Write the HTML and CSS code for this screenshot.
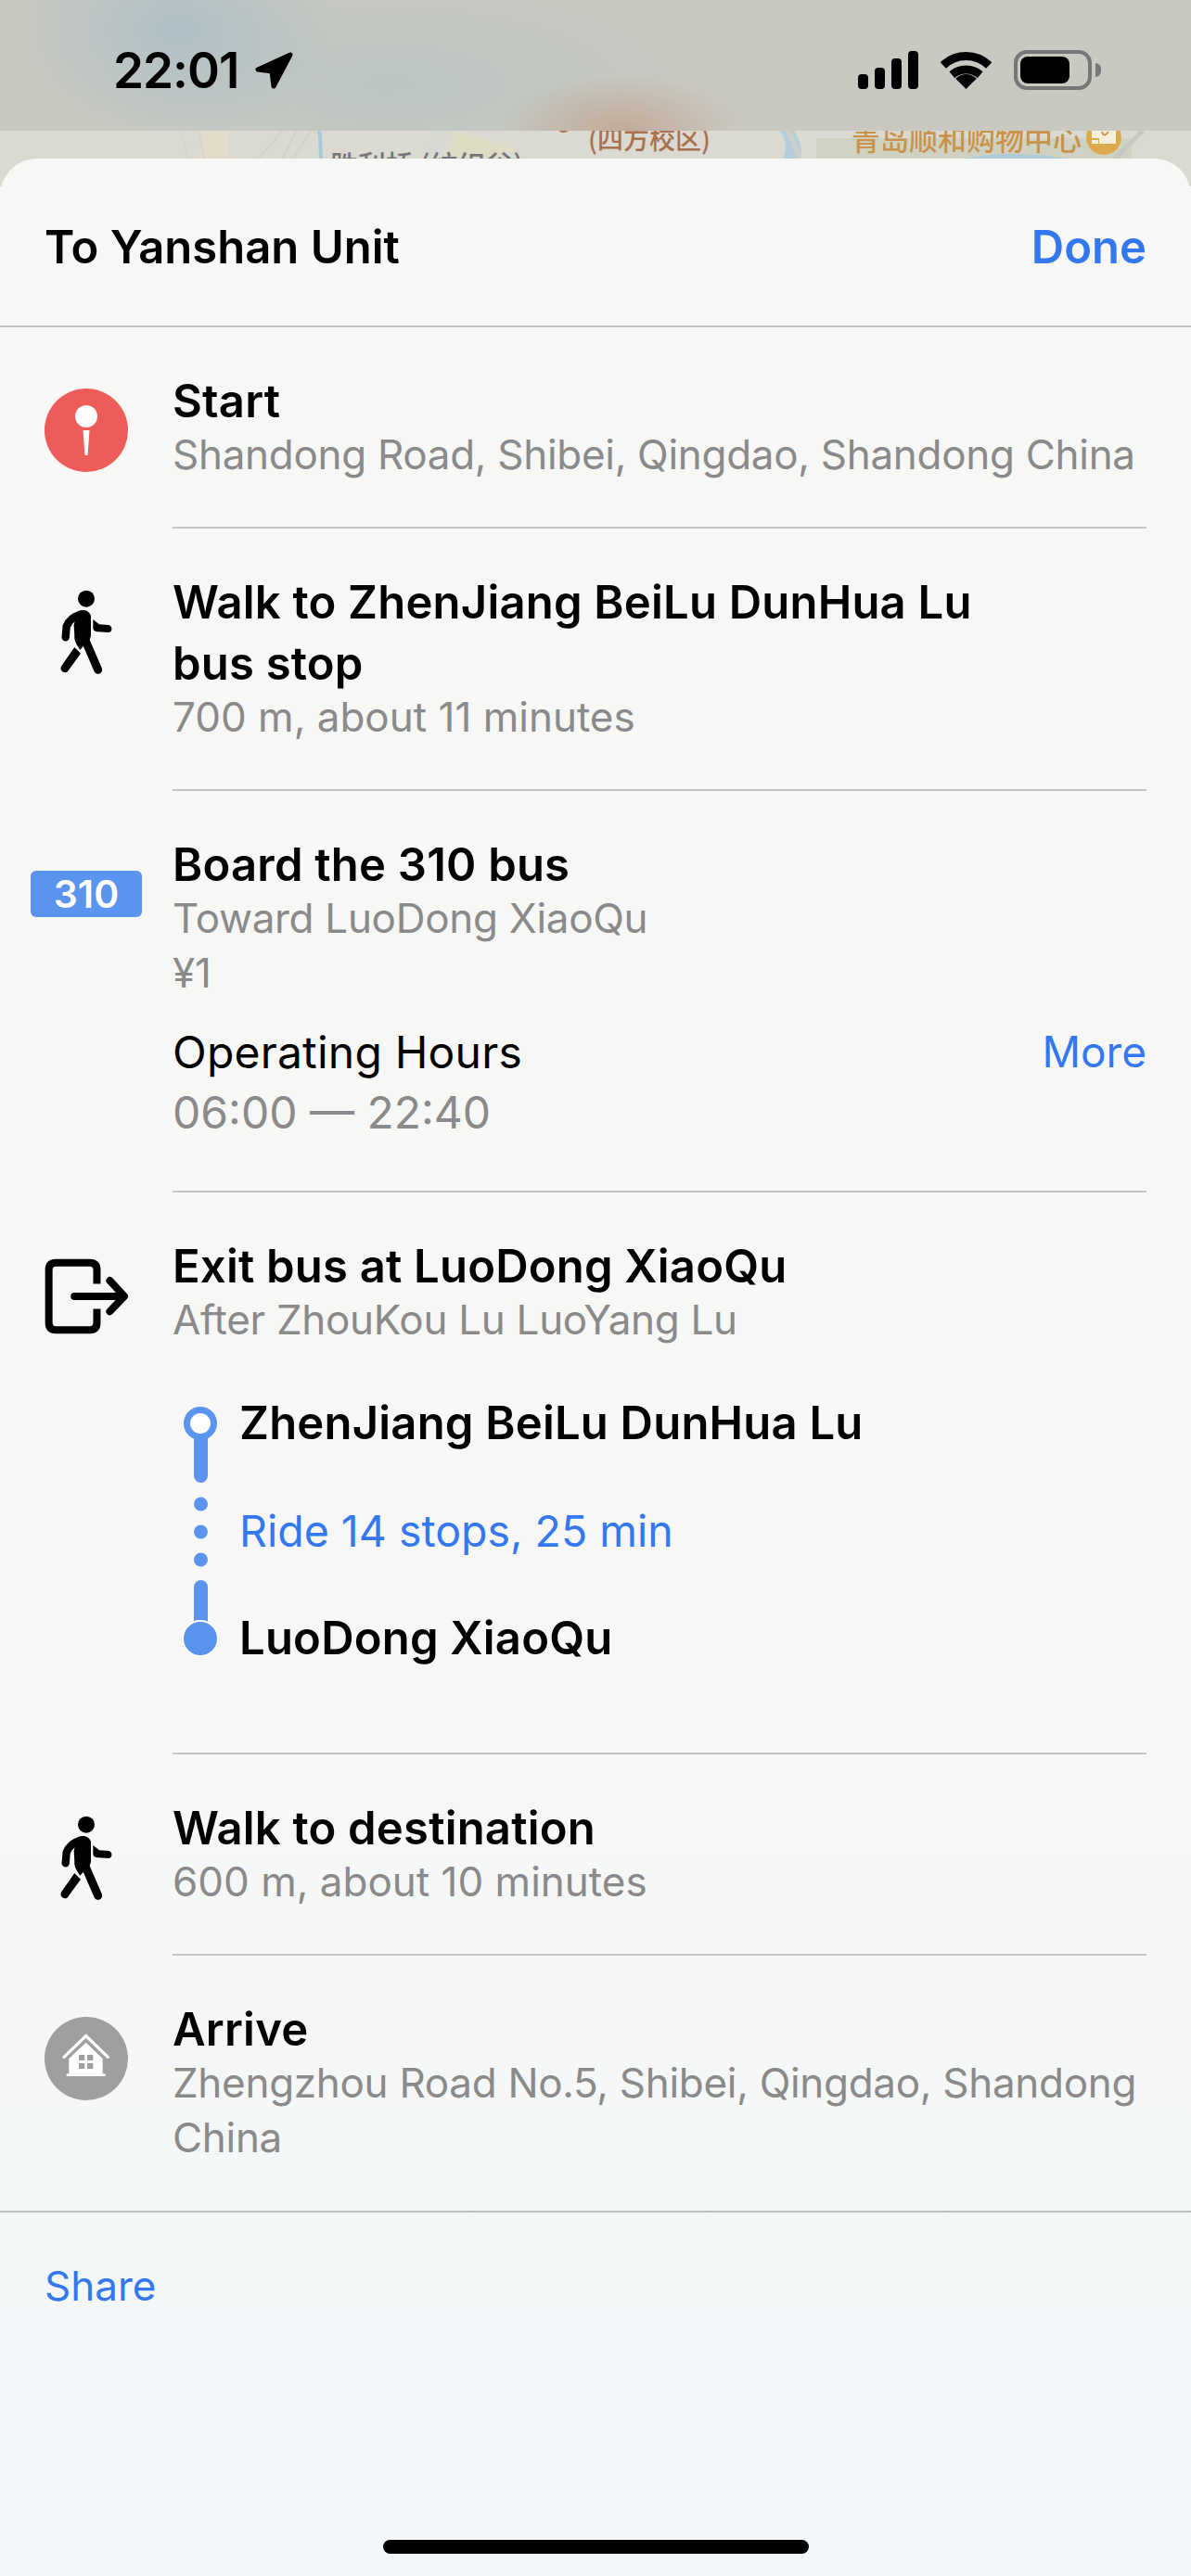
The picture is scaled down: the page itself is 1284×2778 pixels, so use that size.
FILE: index.html
```html
<!DOCTYPE html>
<html lang="en">
<head>
<meta charset="utf-8">
<title>To Yanshan Unit</title>
<link rel="stylesheet" href="styles.css">
</head>
<body>
<div class="screen">
  <div class="status">
    <div class="status-left">
      <span class="time">22:01</span>
      <svg class="loc" viewBox="0 0 44 44"><path d="M40 5 L5 21 L20 23 L22 39 Z" fill="#000" stroke="#000" stroke-width="5" stroke-linejoin="round"/></svg>
    </div>
    <div class="status-right">
      <svg class="signal" viewBox="0 0 65 41"><rect x="0" y="25" width="11" height="16" rx="4"/><rect x="18" y="18" width="11" height="23" rx="4"/><rect x="36" y="8" width="11" height="33" rx="4"/><rect x="54" y="0" width="11" height="41" rx="4"/></svg>
      <svg class="wifi" viewBox="0 0 57 41"><path d="M28.5 41 L17.2 29.7 A16 16 0 0 1 39.8 29.7 Z"/><path d="M13.3 25.7 A23.5 23.5 0 0 1 43.7 25.7" class="wifi-arc"/><path d="M3.8 15.5 A35.5 35.5 0 0 1 53.2 15.5" class="wifi-arc"/></svg>
      <div class="battery"><div class="battery-fill"></div></div>
      <div class="battery-nub"></div>
    </div>
  </div>

  <div class="map">
    <svg class="map-lines" viewBox="0 0 1284 60" preserveAspectRatio="none">
      <rect x="216" y="0" width="30" height="60" fill="#e3dccb"/>
      <path d="M195 0 L205 40 M215 0 L222 40" stroke="#d5d5cd" stroke-width="2" fill="none"/>
      <path d="M300 40 L320 0 M310 40 L335 0 M270 40 L305 0" stroke="#d3d3cc" stroke-width="2" fill="none"/>
      <path d="M344 0 C346 10 346 20 346 40" stroke="#a9c8d8" stroke-width="4" fill="none"/>
      <path d="M460 30 L468 0 L490 0 L470 30 Z" fill="#d9d9d4"/>
      <path d="M490 0 L560 20 L520 30 L480 30 Z" fill="#dfdcc6"/>
      <path d="M840 0 C850 10 848 25 840 40 L860 40 C868 20 862 10 856 0 Z" fill="#b4cfda"/>
      <path d="M850 0 L862 30" stroke="#cfcfc9" stroke-width="5" fill="none"/>
      <rect x="880" y="8" width="340" height="30" fill="#cfd2c3"/>
      <path d="M1040 30 C1080 22 1120 24 1160 32 L1040 40 Z" fill="#aecbd8"/>
      <path d="M1200 32 L1232 0" stroke="#c8c8c2" stroke-width="5" fill="none"/>
    </svg>
    <span class="map-label map-label-gray">胜利桥 (纺织谷)</span>
    <span class="map-label map-label-brown">(四方校区)</span>
    <span class="map-label map-label-gold">青岛顺和购物中心</span>
    <span class="map-dot"></span>
    <span class="map-shop"><svg class="map-bag" viewBox="0 0 38 38"><path d="M6 10 H32 V26 H14 V20 H6 Z" fill="#f6efdc"/><path d="M6 22 H13 V26 H6 Z" fill="#f6efdc"/><path d="M17 13 Q19 20 24 13" fill="none" stroke="#c8934a" stroke-width="2"/></svg></span>
  </div>

  <div class="sheet">
    <div class="header">
      <span class="header-title">To Yanshan Unit</span>
      <span class="header-done">Done</span>
    </div>

    <div class="row">
      <div class="row-icon icon-start">
        <svg class="circle-icon" viewBox="0 0 90 90"><circle cx="45" cy="45" r="45" fill="#ee5c5a"/><circle cx="45" cy="30" r="12" fill="#fff"/><path d="M41.5 45 L48.500 45 L46.500 72 L43.500 72 Z" fill="#fff"/></svg>
      </div>
      <div class="row-body">
        <div class="title">Start</div>
        <div class="sub">Shandong Road, Shibei, Qingdao, Shandong China</div>
      </div>
    </div>

    <div class="row">
      <div class="row-icon icon-walk">
        <svg class="walker" viewBox="100 40 180 285"><use href="#walker-shape"/></svg>
      </div>
      <div class="row-body">
        <div class="title">Walk to ZhenJiang BeiLu DunHua Lu<br>bus stop</div>
        <div class="sub sub-num">700 m, about 11 minutes</div>
      </div>
    </div>

    <div class="row">
      <div class="row-icon icon-bus"><span class="badge">310</span></div>
      <div class="row-body">
        <div class="title">Board the 310 bus</div>
        <div class="sub">Toward LuoDong XiaoQu</div>
        <div class="sub">¥1</div>
        <div class="hours">
          <span class="hours-label">Operating Hours</span>
          <span class="hours-more">More</span>
        </div>
        <div class="hours-value">06:00 — 22:40</div>
      </div>
    </div>

    <div class="row">
      <div class="row-icon icon-exit">
        <svg class="exit" viewBox="140 165 280 252" fill="none" stroke="#000" stroke-width="24" stroke-linecap="round" stroke-linejoin="round"><path d="M313 250 V205 Q313 182 290 182 H180 Q157 182 157 205 V377 Q157 400 180 400 H290 Q313 400 313 377 V332" stroke-linecap="butt"/><path d="M240 291 H400 M355 240 L402 291 L355 340"/></svg>
      </div>
      <div class="row-body">
        <div class="title">Exit bus at LuoDong XiaoQu</div>
        <div class="sub">After ZhouKou Lu LuoYang Lu</div>
        <div class="stops">
          <svg class="rail" viewBox="0 0 72 348">
            <rect x="23" y="58" width="15" height="64" rx="7.500" fill="#5b94ef"/>
            <circle cx="30" cy="58" r="14.500" fill="#fff" stroke="#5b94ef" stroke-width="7"/>
            <circle cx="30.500" cy="145" r="7.500" fill="#5b94ef"/>
            <circle cx="30.500" cy="175" r="7.500" fill="#5b94ef"/>
            <circle cx="30.500" cy="205" r="7.500" fill="#5b94ef"/>
            <rect x="23" y="227" width="15" height="60" rx="7.500" fill="#5b94ef"/>
            <circle cx="30" cy="290" r="19" fill="#5b94ef" stroke="#fff" stroke-width="2"/>
          </svg>
          <div class="stop-list">
            <div class="stop">ZhenJiang BeiLu DunHua Lu</div>
            <div class="ride">Ride 14 stops, 25 min</div>
            <div class="stop">LuoDong XiaoQu</div>
          </div>
        </div>
      </div>
    </div>

    <div class="row">
      <div class="row-icon icon-walk">
        <svg class="walker" viewBox="100 40 180 285"><use href="#walker-shape"/></svg>
      </div>
      <div class="row-body">
        <div class="title">Walk to destination</div>
        <div class="sub sub-num">600 m, about 10 minutes</div>
      </div>
    </div>

    <div class="row">
      <div class="row-icon icon-arrive">
        <svg class="circle-icon" viewBox="145 105 270 270"><circle cx="280" cy="240" r="135" fill="#a09f9e"/><path d="M208 235 L279 167 L350 235" fill="none" stroke="#fff" stroke-width="10" stroke-linecap="round"/><path d="M224 240 L279 188 L333 240 V290 H224 Z" fill="#fff"/><rect x="216" y="289" width="126" height="8" fill="#fff"/><rect x="256" y="228" width="19" height="18" fill="#a09f9e"/><rect x="283" y="228" width="19" height="18" fill="#a09f9e"/><rect x="256" y="255" width="19" height="18" fill="#a09f9e"/><rect x="283" y="255" width="19" height="18" fill="#a09f9e"/></svg>
      </div>
      <div class="row-body row-body-last">
        <div class="title">Arrive</div>
        <div class="sub">Zhengzhou Road No.5, Shibei, Qingdao, Shandong China</div>
      </div>
    </div>

    <div class="footer"><span class="share">Share</span></div>
  </div>
  <div class="home-bar"></div>

  <svg class="defs" width="0" height="0">
    <defs>
      <g id="walker-shape">
        <circle cx="190" cy="75" r="27"/>
        <path d="M160 118 C175 108 198 110 205 130 L205 195 C203 205 198 215 190 218 L170 240 C160 225 150 210 152 195 L150 160 Z"/>
        <path d="M175 125 C150 132 132 148 126 165 L123 200" fill="none" stroke="#000" stroke-width="25" stroke-linecap="round"/>
        <path d="M152 232 L172 252 L130 310 C122 320 100 308 110 292 Z"/>
        <path d="M185 205 L228 305" fill="none" stroke="#000" stroke-width="27" stroke-linecap="round"/>
        <path d="M212 142 L232 158 L262 160 C276 162 276 184 262 184 L228 182 C220 182 212 178 212 170 Z"/>
      </g>
    </defs>
  </svg>
</div>
</body>
</html>
```
FILE: styles.css
```css
* { box-sizing: border-box; }

html, body {
  margin: 0;
  padding: 0;
}

body {
  font-family: Inter, "Noto Sans CJK SC", "Liberation Sans", sans-serif;
  color: #000;
}

.screen {
  position: relative;
  width: 1284px;
  height: 2778px;
  overflow: hidden;
  background: #f5f7f8;
  display: flex;
  flex-direction: column;
}

.status {
  flex: none;
  height: 141px;
  display: flex;
  justify-content: space-between;
  align-items: flex-start;
  padding: 54px 97px 0 122px;
  background:
    radial-gradient(ellipse 130px 60px at 670px 140px, rgba(190, 150, 125, 0.6), rgba(190, 150, 125, 0) 100%),
    radial-gradient(ellipse 170px 120px at 190px 30px, rgba(165, 188, 200, 0.7), rgba(165, 188, 200, 0) 100%),
    radial-gradient(ellipse 320px 110px at 420px 90px, rgba(178, 195, 195, 0.55), rgba(178, 195, 195, 0) 100%),
    #c9c9c2;
}

.status-left {
  display: flex;
  align-items: center;
  gap: 16px;
}

.time {
  font-size: 53px;
  font-weight: 600;
  line-height: 44px;
  letter-spacing: -1px;
}

.loc {
  width: 44px;
  height: 44px;
}

.status-right {
  display: flex;
  align-items: flex-start;
}

.signal {
  width: 65px;
  height: 41px;
  fill: #000;
  margin-top: 1px;
}

.wifi {
  width: 57px;
  height: 41px;
  fill: #000;
  margin: 1px 23px 0 23px;
}

.wifi-arc {
  fill: none;
  stroke: #000;
  stroke-width: 9;
}

.battery {
  width: 84px;
  height: 43px;
  border: 4px solid #77777a;
  border-radius: 14px;
  padding: 3px;
}

.battery-fill {
  width: 53px;
  height: 29px;
  background: #000;
  border-radius: 8px;
}

.battery-nub {
  width: 6px;
  height: 15px;
  margin: 14px 0 0 4px;
  background: #77777a;
  border-radius: 0 8px 8px 0;
}

.map {
  position: relative;
  flex: none;
  height: 60px;
  overflow: hidden;
  background: #dadad2;
}

.map-lines {
  position: absolute;
  left: 0;
  top: 0;
  width: 1284px;
  height: 60px;
}

.map-label {
  position: absolute;
  font-family: "Noto Sans CJK SC", sans-serif;
  white-space: nowrap;
  font-weight: 500;
}

.map-label-gray {
  left: 356px;
  top: 15px;
  font-size: 30px;
  line-height: 40px;
  color: #76767a;
}

.map-label-brown {
  left: 634px;
  top: -12px;
  font-size: 28px;
  line-height: 40px;
  color: #a9714f;
}

.map-label-gold {
  left: 918px;
  top: -12px;
  font-size: 31px;
  line-height: 40px;
  color: #c8934a;
}

.map-dot {
  position: absolute;
  left: 600px;
  top: -13px;
  width: 15px;
  height: 15px;
  border-radius: 50%;
  background: #a9714f;
}

.map-shop {
  position: absolute;
  left: 1171px;
  top: -12px;
  width: 38px;
  height: 38px;
  border-radius: 50%;
  background: #dcaa4b;
}

.map-bag {
  display: block;
  width: 38px;
  height: 38px;
}

.sheet {
  flex: 1;
  margin-top: -30px;
  position: relative;
  border-radius: 40px 40px 0 0;
  display: flex;
  flex-direction: column;
  background: linear-gradient(#f7f7f6 0, #f7f7f6 60%, #f3f7f9 100%);
}

.header {
  flex: none;
  height: 182px;
  padding: 10px 48px 0 48px;
  display: flex;
  justify-content: space-between;
  align-items: center;
  border-bottom: 2px solid #c0c0bf;
  font-size: 49px;
  font-weight: 600;
}

.header-done {
  color: #3478f0;
}

.row {
  flex: none;
  display: flex;
}

.row-icon {
  flex: none;
  width: 186px;
  display: flex;
  justify-content: center;
  align-items: flex-start;
}

.icon-start { padding-top: 66px; }
.icon-walk { padding-top: 64px; }
.icon-bus { padding-top: 86px; }
.icon-exit { padding-top: 70px; }
.icon-arrive { padding-top: 66px; }

.circle-icon {
  width: 90px;
  height: 90px;
}

.walker {
  width: 60px;
  height: 95px;
}

.exit {
  width: 93px;
  height: 84px;
}

.badge {
  width: 120px;
  height: 50px;
  border-radius: 6px;
  background: #5b94ef;
  color: #fff;
  font-size: 41px;
  font-weight: 600;
  line-height: 50px;
  text-align: center;
}

.row-body {
  flex: 1;
  min-width: 0;
  margin-right: 48px;
  padding: 47px 0 48px;
  border-bottom: 2px solid #c4c4c3;
}

.row-body-last {
  border-bottom: 0;
  padding-bottom: 49px;
}

.title {
  font-size: 49px;
  font-weight: 600;
  line-height: 66px;
  letter-spacing: 0.2px;
}

.sub {
  font-size: 44px;
  line-height: 59px;
  letter-spacing: -0.3px;
  color: #8a8a8a;
}

.sub-num {
  letter-spacing: 0;
}

.title + .sub {
  margin-top: -5px;
}

.hours {
  display: flex;
  justify-content: space-between;
  margin-top: 23px;
  font-size: 48px;
  line-height: 65px;
}

.hours-label {
  letter-spacing: 0.2px;
}

.hours-more {
  color: #3478f0;
  font-size: 46px;
}

.hours-value {
  font-size: 48px;
  line-height: 65px;
  margin-bottom: 4px;
  color: #8a8a8a;
}

.stops {
  display: flex;
  margin-top: 24px;
  padding-bottom: 17px;
}

.rail {
  flex: none;
  width: 72px;
  height: 348px;
}

.stop-list {
  flex: 1;
  display: flex;
  flex-direction: column;
}

.stop,
.ride {
  height: 116px;
  line-height: 116px;
  font-size: 49px;
  font-weight: 600;
  letter-spacing: 0.2px;
}

.ride {
  font-weight: 400;
  font-size: 46.500px;
  letter-spacing: 0;
  color: #3478f0;
}

.footer {
  flex: none;
  border-top: 2px solid #c0c0bf;
  padding: 50px 48px 0;
}

.share {
  font-size: 44px;
  line-height: 59px;
  color: #3478f0;
}

.home-bar {
  position: absolute;
  left: 413px;
  top: 2739px;
  width: 459px;
  height: 15px;
  border-radius: 8px;
  background: #000;
}

.defs {
  position: absolute;
}
```
